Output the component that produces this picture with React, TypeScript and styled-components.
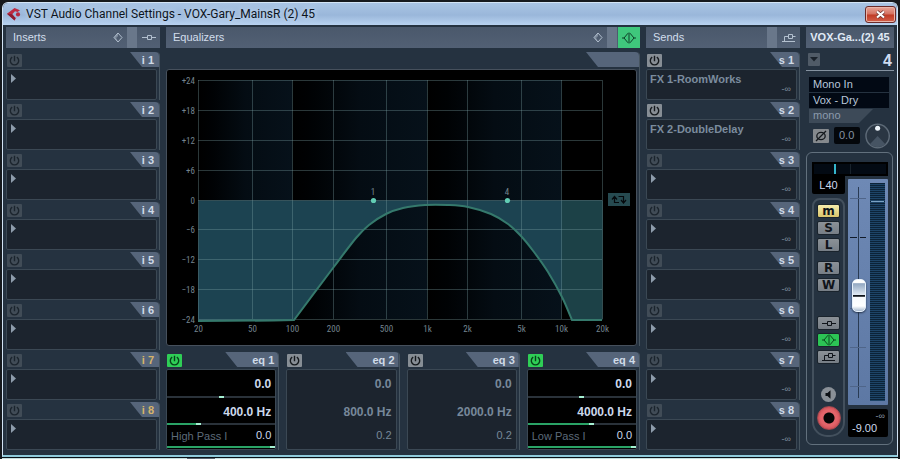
import React from "react";
import styled, { createGlobalStyle, css } from "styled-components";

const SANS = `"Liberation Sans", Arial, sans-serif`;
const NARROW = `"Liberation Sans Narrow", "Roboto Condensed", "Liberation Sans", sans-serif`;

const Global = createGlobalStyle`
  *, *::before, *::after { box-sizing: border-box; }
  body { margin: 0; background: #16191d; font-family: ${SANS}; font-size: 11px; color: #c3cedb; }
  button, input, select { font: inherit; color: inherit; margin: 0; padding: 0; border: 0; }
  h1, h2, p { margin: 0; font-weight: normal; }
`;

/* ---------- window frame ---------- */

const Desktop = styled.div`
  padding: 2px 2px 0 2px;
`;

const Window = styled.main`
  border: 1px solid #d3e4f5;
  border-bottom: 2px solid #8fcbdc;
  border-radius: 6px 6px 0 0;
  background: #253240;
  overflow: hidden;
`;

const TitleBar = styled.header`
  display: flex;
  align-items: center;
  gap: 4px;
  height: 22px;
  padding: 0 1px 0 4px;
  background: linear-gradient(#a9c4e4, #9ab7da 55%, #b8d2f0);
  color: #0c141d;
`;

const Title = styled.h1`
  flex: 1;
  font: 12px/20px Roboto, "Noto Sans", sans-serif;
  white-space: nowrap;
  text-shadow: 0 0 5px #dcebfa;
`;

const CloseButton = styled.button`
  display: grid;
  place-items: center;
  width: 31px;
  height: 17px;
  border: 1px solid #6b2a29;
  border-radius: 3px;
  background: linear-gradient(#e6a599, #d4705f 48%, #bf3a25 52%, #d3604a);
  box-shadow: inset 0 0 0 1px #eab5aa;
`;

const Underlay = styled.div`
  display: flex;
  height: 2px;
  border-top: 1px solid #0a1118;
  background: #c4dede;
`;

const UnderlayBlock = styled.i`
  width: 28px;
  margin-left: 185px;
  background: #55606c;
`;

/* ---------- columns ---------- */

const Columns = styled.div`
  display: grid;
  grid-template-columns: 154px minmax(0, 1fr) 154px 88px;
  gap: 6px;
  padding: 2px 3px 5px 3px;
`;

const Column = styled.section`
  display: flex;
  flex-direction: column;
  gap: 4px;
  min-width: 0;
`;

const Header = styled.div`
  display: flex;
  align-items: stretch;
  height: 21px;
  background: linear-gradient(#4a586b, #526074);
`;

const HeaderTitle = styled.h2`
  flex: 1;
  padding-left: 7px;
  font-size: 11px;
  line-height: 20px;
  color: #d2deec;
`;

const HeaderButton = styled.button<{ $on?: boolean; $narrow?: boolean }>`
  display: grid;
  place-items: center;
  width: ${(p) => (p.$narrow ? 18 : 22)}px;
  background: ${(p) => (p.$on ? "#3fc77c" : "transparent")};
  color: ${(p) => (p.$on ? "#0f4029" : "#b3c0cf")};
`;

const HeaderStrip = styled.span`
  width: 10px;
  background: #69778a;
  margin-right: 1px;
`;

/* ---------- modules (slot, band, graph) ---------- */

const Module = styled.div`
  border-right: 1px solid #46545f;
  border-top-right-radius: 4px;
  padding-right: 2px;
`;

const ModuleTop = styled.div`
  display: flex;
  justify-content: space-between;
  height: 17px;
  padding-left: 1px;
  margin-right: -2px;
`;

const Tab = styled.span<{ $wide?: boolean; $gold?: boolean }>`
  width: ${(p) => (p.$wide ? 53 : 29)}px;
  height: 15px;
  padding-right: ${(p) => (p.$wide ? 4 : 5)}px;
  border-top-right-radius: 4px;
  clip-path: polygon(0 0, 100% 0, 100% 100%, 12px 100%);
  background: #56657a;
  color: ${(p) => (p.$gold ? "#d6b46a" : "#d0dbe8")};
  font-weight: bold;
  font-size: 11px;
  line-height: 16px;
  text-align: right;
  white-space: nowrap;
`;

const Power = styled.button<{ $tone: "off" | "lit" | "green" }>`
  display: grid;
  place-items: center;
  width: 15px;
  height: 13px;
  margin-top: 2px;
  border-radius: 1px;
  ${(p) =>
    p.$tone === "off"
      ? css`background: #414c57; color: #1b242d;`
      : p.$tone === "lit"
      ? css`background: #878e95; color: #14181c;`
      : css`background: #2fce56; color: #07401a;`}
`;

const SlotList = styled.div`
  display: grid;
  gap: 2px;
`;

const SlotBox = styled.div`
  display: flex;
  flex-direction: column;
  justify-content: space-between;
  height: 31px;
  padding: 3px 5px 5px 3px;
  border: 1px solid #3b4854;
  border-radius: 2px;
  background: #1c242e;
`;

const SlotName = styled.p`
  font-weight: bold;
  font-size: 11px;
  line-height: 12px;
  height: 11px;
  color: #7b8c9e;
`;

const SlotArrow = styled.button`
  display: block;
  width: 5px;
  height: 9px;
  margin: 1px 0 1px 1px;
  background: #8e9cab;
  clip-path: polygon(0 0, 100% 50%, 0 100%);
`;

const SlotLevel = styled.span`
  align-self: flex-end;
  font-size: 9px;
  line-height: 10px;
  color: #7e8d9d;
`;

/* ---------- equalizer ---------- */

const GraphFrame = styled.div`
  height: 277px;
  border: 1px solid #46505c;
  border-radius: 3px;
  background: #000;
  overflow: hidden;
`;

const GraphSvg = styled.svg`
  display: block;
  width: 100%;
  height: 100%;
  text {
    font-family: ${NARROW};
    font-size: 9px;
    fill: #74848e;
  }
`;

const Bands = styled.div`
  display: grid;
  grid-template-columns: repeat(4, minmax(0, 1fr));
  gap: 7px;
  margin-top: 2px;
`;

const BandBox = styled.div<{ $on: boolean }>`
  display: grid;
  grid-template-rows: 26px 2px 25px 2px 21px 2px;
  height: 81px;
  border: 1px solid #3b4854;
  border-radius: 2px;
  background: ${(p) => (p.$on ? "#000" : "#1c242e")};
  color: ${(p) => (p.$on ? "#ccd9ec" : "#77889a")};
`;

const BandValue = styled.output`
  padding-right: 4px;
  font-weight: bold;
  font-size: 12px;
  line-height: 28px;
  text-align: right;
`;

const BandFooter = styled.div`
  display: flex;
  justify-content: space-between;
  padding: 0 4px;
  font-size: 11px;
  line-height: 21px;
`;

const FilterSelect = styled.select`
  appearance: none;
  background: transparent;
  color: #5d6b7a;
  font-size: 11px;
  line-height: 20px;
`;

const BandSlider = styled.input<{ $on: boolean; $fill: number }>`
  appearance: none;
  display: block;
  width: 100%;
  height: 2px;
  visibility: ${(p) => (p.$on ? "visible" : "hidden")};
  background: linear-gradient(to right, #2aa366 ${(p) => p.$fill}%, #2a323a ${(p) => p.$fill}%);
  &::-webkit-slider-thumb {
    appearance: none;
    width: 5px;
    height: 2px;
    background: #a5f0d2;
  }
`;

/* ---------- channel strip ---------- */

const ChannelName = styled.h2`
  height: 21px;
  background: linear-gradient(#4a586b, #526074);
  font-weight: bold;
  font-size: 11px;
  line-height: 21px;
  text-align: center;
  color: #e0eaf6;
  white-space: nowrap;
`;

const ChannelRow = styled.div`
  display: flex;
  justify-content: space-between;
  align-items: center;
  height: 19px;
  padding: 0 2px;
  border-bottom: 1px solid #8592a0;
  font-weight: bold;
  font-size: 16px;
  color: #cfdcf0;
`;

const MenuButton = styled.button`
  display: grid;
  place-items: center;
  width: 12px;
  height: 13px;
  margin-bottom: 3px;
  border-radius: 1px;
  background: #505b67;
  color: #1a222b;
`;

const Routing = styled.div`
  display: grid;
  gap: 1px;
  margin: 2px 5px 0 3px;
`;

const RouteButton = styled.button`
  height: 15px;
  padding-left: 4px;
  background: #020914;
  color: #b9c7da;
  font-size: 11px;
  line-height: 15px;
  text-align: left;
`;

const MonoTag = styled.span`
  width: 64px;
  height: 14px;
  padding-left: 4px;
  clip-path: polygon(0 0, 100% 0, 50px 100%, 0 100%);
  background: #3d4a58;
  color: #8c9bac;
  font-size: 11px;
  line-height: 13px;
`;

const InputRow = styled.div`
  display: flex;
  align-items: center;
  gap: 5px;
  height: 25px;
  margin-top: -4px;
  padding: 0 4px 0 7px;
  color: #8593a2;
`;

const PhaseButton = styled.button`
  display: grid;
  place-items: center;
  width: 16px;
  height: 14px;
  border-radius: 1px;
  background: #85898d;
  color: #15191d;
`;

const Gain = styled.output`
  width: 27px;
  height: 17px;
  border-radius: 2px;
  background: #04070b;
  font-size: 11px;
  line-height: 17px;
  text-align: center;
`;

const Strip = styled.div`
  display: flex;
  flex-direction: column;
  margin-right: 1px;
  height: 293px;
  padding: 9px 4px 7px 5px;
  border: 1px solid #62707d;
  border-radius: 6px;
`;

const PanBar = styled.input`
  appearance: none;
  width: 100%;
  height: 14px;
  border: 2px solid #000;
  background: linear-gradient(#18222b, #18222b) 50% / 1px 100% no-repeat #030a13;
  &::-webkit-slider-thumb {
    appearance: none;
    width: 2px;
    height: 10px;
    background: #35b6cc;
  }
`;

const StripBody = styled.div`
  display: grid;
  grid-template-columns: 33px minmax(0, 1fr);
  gap: 3px;
  flex: 1;
`;

const StripColumn = styled.div`
  display: flex;
  flex-direction: column;
  gap: 4px;
`;

const PanValue = styled.output`
  height: 18px;
  border-radius: 0 0 2px 2px;
  background: #000;
  color: #cbd9ee;
  font-size: 11px;
  line-height: 18px;
  text-align: center;
`;

const Rail = styled.div`
  display: flex;
  flex-direction: column;
  align-items: center;
  gap: 3px;
  flex: 1;
  padding-top: 4px;
  border: 2px solid #43505d;
  border-radius: 8px 8px 15px 15px;
`;

const RailButton = styled.button<{ $tone?: "yellow" | "green"; $gap?: boolean }>`
  display: grid;
  place-items: center;
  width: 23px;
  height: 14px;
  margin-top: ${(p) => (p.$gap ? 6 : 0)}px;
  border: 1px solid #1a232c;
  border-radius: 2px;
  background: ${(p) => (p.$tone === "yellow" ? "linear-gradient(#f6ecab, #d9c46c)" : p.$tone === "green" ? "#2cc455" : "linear-gradient(#8b9197, #777e86)")};
  color: ${(p) => (p.$tone === "green" ? "#0b4a1e" : "#10141a")};
  font: bold 12px/12px "DejaVu Sans", sans-serif;
`;

const RailGroup = styled.div`
  display: grid;
  gap: 3px;
  margin-top: 21px;
`;

const SpeakerButton = styled.button`
  display: grid;
  place-items: center;
  width: 15px;
  height: 15px;
  margin-top: 20px;
  border-radius: 50%;
  background: #8a9097;
  color: #0c1015;
`;

const RecordButton = styled.button`
  width: 24px;
  height: 24px;
  margin-top: 1px;
  border: 1px solid #a24a50;
  border-radius: 50%;
  background: radial-gradient(circle, #050505 5px, #e2646a 6px, #e2646a 8px, #cb4a51 12px);
`;

const FaderBay = styled.div`
  position: relative;
  height: 226px;
  margin-top: 3px;
  border-radius: 1px;
  background: linear-gradient(#6e89b5, #5d78a4);
  overflow: hidden;
`;

const FaderScale = styled.svg`
  display: block;
  width: 39px;
  height: 226px;
`;

const Fader = styled.input`
  position: absolute;
  inset: 0 auto 0 3px;
  writing-mode: vertical-lr;
  direction: rtl;
  appearance: none;
  width: 15px;
  height: 100%;
  background: transparent;
  &::-webkit-slider-thumb {
    appearance: none;
    width: 14px;
    height: 33px;
    border: 1px solid #e7f1fb;
    border-radius: 5px;
    background: linear-gradient(#fff 0 8%, #93a8c2 12%, #e3ecf6 49%, #10151c 50%, #10151c 53%, #f7fafd 54%, #fff 84%, #a9bbd0);
    box-shadow: 0 1px 2px #25344a;
  }
`;

const Readout = styled.div`
  height: 28px;
  padding: 2px 3px 0 4px;
  border-radius: 2px;
  background: #000;
  color: #ccd9ec;
  font-size: 11px;
  line-height: 13px;
`;

const Peak = styled.p`
  font-size: 9px;
  line-height: 11px;
  text-align: right;
  color: #8b99a8;
`;

/* ---------- icons ---------- */

const PowerIcon = () => (
  <svg width="11" height="11" viewBox="0 0 11 11" fill="none" stroke="currentColor" strokeWidth="1.4" aria-hidden="true">
    <path d="M3.2 2.2a4.2 4.2 0 1 0 4.6 0M5.5 .8v5.4" />
  </svg>
);

const PresetIcon = () => (
  <svg width="10" height="11" viewBox="0 0 10 11" fill="none" stroke="currentColor" aria-hidden="true">
    <path d="M5 1 9 5.5 5 10 1 5.5Z" strokeWidth="1" />
    <path d="M1 5.5 5 1v3.2L3.2 6 5 10Z" fill="currentColor" stroke="none" opacity="0.45" />
  </svg>
);

const InsertIcon = () => (
  <svg width="14" height="9" viewBox="0 0 14 9" fill="none" stroke="currentColor" aria-hidden="true">
    <path d="M0 4.5h5M10 4.5h4M5.5 2.5h4v4h-4z" />
  </svg>
);

const EqIcon = () => (
  <svg width="14" height="12" viewBox="0 0 14 12" fill="none" stroke="currentColor" aria-hidden="true">
    <path d="M0 6h2.5M11.5 6H14M7 .5v11M6 1.2 2 6l4 4.8M8 1.2 12 6l-4 4.8" />
  </svg>
);

const SendIcon = () => (
  <svg width="14" height="10" viewBox="0 0 14 10" fill="none" stroke="currentColor" aria-hidden="true">
    <path d="M0 8.5h13M2.5 8V3.5H6M6.5 1.5h4v4h-4zM11 3.5h2.5" />
  </svg>
);

const CaretIcon = () => (
  <svg width="8" height="5" viewBox="0 0 8 5" aria-hidden="true"><path d="M0 0h8L4 4.5Z" fill="currentColor" /></svg>
);

const PhaseIcon = () => (
  <svg width="12" height="12" viewBox="0 0 12 12" fill="none" stroke="currentColor" strokeWidth="1.3" aria-hidden="true">
    <ellipse cx="6" cy="6" rx="4.2" ry="3.7" /><path d="M1 11 11 1" />
  </svg>
);

const SpeakerIcon = () => (
  <svg width="9" height="9" viewBox="0 0 9 9" fill="currentColor" aria-hidden="true"><path d="M1.5 3H3.5L6.5.3V8.7L3.5 6H1.5Z" /></svg>
);

const CloseIcon = () => (
  <svg width="11" height="9" viewBox="0 0 11 9" aria-hidden="true">
    <path d="M2 1.5 9 7.5M9 1.5 2 7.5" stroke="#6d3430" strokeWidth="3.6" />
    <path d="M2 1.5 9 7.5M9 1.5 2 7.5" stroke="#fff" strokeWidth="2.1" />
  </svg>
);

const Logo = () => (
  <svg width="15" height="15" viewBox="0 0 15 15" aria-hidden="true">
    <path d="M0 6.8 7.5 1 13 3.2 10.5 5 8 4.2 5.2 7.2 8.2 10.8 9.4 10.5 7.6 13.5Z" fill="#bd2a41" />
    <path d="M0 6.8 5.2 7.2 8.2 10.8 7.6 13.5Z" fill="#8d1c30" />
    <circle cx="11" cy="7.4" r="2.1" fill="#b82840" />
  </svg>
);

const PanKnob = () => (
  <svg width="26" height="26" viewBox="0 0 26 26" role="img" aria-label="Input gain knob">
    <circle cx="13" cy="13" r="12" fill="#2a3643" stroke="#5d6a77" strokeWidth="1.5" />
    <path d="M13 13 21 21.5A12 12 0 0 1 5 21.5Z" fill="#465463" />
    <circle cx="13" cy="5" r="2.6" fill="#eef4fa" />
  </svg>
);

/* ---------- graph ---------- */

const PLOT = { x: 30, y: 10, w: 404, h: 239 };
const FREQS: [number, string][] = [
  [20, "20"], [50, "50"], [100, "100"], [200, "200"], [500, "500"],
  [1000, "1k"], [2000, "2k"], [5000, "5k"], [10000, "10k"], [20000, "20k"],
];
const LEVELS = [24, 18, 12, 6, 0, -6, -12, -18, -24];

const freqX = (f: number) => Math.round(PLOT.x + (Math.log10(f / 20) / 3) * PLOT.w) + 0.5;
const levelY = (db: number) => Math.round(PLOT.y + ((24 - db) / 48) * PLOT.h) + 0.5;
const levelText = (db: number) => (db > 0 ? `+${db}` : db < 0 ? `−${-db}` : "0");

const RESPONSE: [number, number][] = [
  [126, 250], [165, 198], [188, 168], [201, 155], [218, 144], [235, 138], [257, 135], [280, 135],
  [300, 137], [323, 144], [340, 154], [353, 166], [366, 182], [380, 202], [394, 227], [404, 250],
];

const smooth = (pts: [number, number][]) =>
  pts.slice(0, -1).map((p1, i) => {
    const p0 = pts[Math.max(i - 1, 0)];
    const p2 = pts[i + 1];
    const p3 = pts[Math.min(i + 2, pts.length - 1)];
    return `C${p1[0] + (p2[0] - p0[0]) / 6} ${p1[1] + (p2[1] - p0[1]) / 6} ${p2[0] - (p3[0] - p1[0]) / 6} ${p2[1] - (p3[1] - p1[1]) / 6} ${p2[0]} ${p2[1]}`;
  }).join("");

const CURVE = `M30 251 L105 250.5 L126 250${smooth(RESPONSE)}L434 250`;
const DECADES: [number, number][] = [[20, 100], [100, 1000], [1000, 10000]];

const Graph = () => {
  const zero = levelY(0);
  return (
    <GraphFrame>
      <GraphSvg viewBox="0 0 467 275" role="img" aria-label="Equalizer curve">
        <defs>
          <linearGradient id="decade">
            <stop offset="0" stopColor="#000" /><stop offset="0.15" stopColor="#000204" />
            <stop offset="0.5" stopColor="#040c13" /><stop offset="1" stopColor="#06111a" />
          </linearGradient>
        </defs>
        {DECADES.map(([a, b]) => (
          <rect key={a} x={freqX(a)} y={PLOT.y} width={freqX(b) - freqX(a)} height={PLOT.h} fill="url(#decade)" />
        ))}
        <path d={`${CURVE}L434.5 ${zero}H30.5Z`} fill="#1c4351" />
        <path d={`M404 250 394 227V${zero}H434.5V250Z`} fill="#1c4147" />
        <g stroke="#7da3a8" strokeOpacity="0.34">
          {FREQS.map(([f]) => <path key={f} d={`M${freqX(f)} ${PLOT.y}V${PLOT.y + PLOT.h}`} />)}
          {LEVELS.map((l) => <path key={l} d={`M${PLOT.x} ${levelY(l)}H${PLOT.x + PLOT.w}`} />)}
        </g>
        <path d={CURVE} fill="none" stroke="#35796c" strokeWidth="2" />
        {LEVELS.map((l) => <text key={l} x="27" y={levelY(l) + 3} textAnchor="end">{levelText(l)}</text>)}
        {FREQS.map(([f, label]) => <text key={f} x={freqX(f)} y="262" textAnchor="middle">{label}</text>)}
        <g fill="#62cdb4"><circle cx="205.5" cy={zero} r="2.6" /><circle cx="339.5" cy={zero} r="2.6" /></g>
        <text x="205" y="125" textAnchor="middle">1</text>
        <text x="339" y="125" textAnchor="middle">4</text>
        <rect x="440" y="123" width="22" height="13" fill="#264a50" />
        <path d="M446.5 133V127M444 129.5l2.500-3 2.500 3M446 132.500h5M450.500 126.500h5V132M453 130l2.500 3 2.500-3" fill="none" stroke="#05090c" strokeWidth="1.200" />
      </GraphSvg>
    </GraphFrame>
  );
};

/* ---------- panels ---------- */

type SlotData = { label: string; gold?: boolean; name?: string; level?: boolean };

const Slot = ({ label, gold, name, level }: SlotData) => (
  <Module>
    <ModuleTop>
      <Power $tone={name ? "lit" : "off"} aria-label={`Power ${label}`}><PowerIcon /></Power>
      <Tab $gold={gold}>{label}</Tab>
    </ModuleTop>
    <SlotBox>
      {name ? <SlotName>{name}</SlotName> : <SlotArrow aria-label={`Select effect ${label}`} />}
      {level && <SlotLevel>-∞</SlotLevel>}
    </SlotBox>
  </Module>
);

const NUMBERS = [1, 2, 3, 4, 5, 6, 7, 8];
const INSERTS: SlotData[] = NUMBERS.map((n) => ({ label: `i ${n}`, gold: n > 6 }));
const SEND_NAMES = ["FX 1-RoomWorks", "FX 2-DoubleDelay"];
const SENDS: SlotData[] = NUMBERS.map((n) => ({ label: `s ${n}`, name: SEND_NAMES[n - 1], level: true }));

type BandData = { label: string; freq: string; pos: number; q: string; filter?: string };
const BANDS: BandData[] = [
  { label: "eq 1", freq: "400.0 Hz", pos: 28, q: "0.0", filter: "High Pass I" },
  { label: "eq 2", freq: "800.0 Hz", pos: 36, q: "0.2" },
  { label: "eq 3", freq: "2000.0 Hz", pos: 48, q: "0.2" },
  { label: "eq 4", freq: "4000.0 Hz", pos: 59, q: "0.0", filter: "Low Pass I" },
];

const Band = ({ label, freq, pos, q, filter }: BandData) => {
  const on = Boolean(filter);
  return (
    <Module>
      <ModuleTop>
        <Power $tone={on ? "green" : "lit"} aria-label={`Power ${label}`}><PowerIcon /></Power>
        <Tab $wide>{label}</Tab>
      </ModuleTop>
      <BandBox $on={on}>
        <BandValue>0.0</BandValue>
        <BandSlider type="range" $on={on} $fill={0} defaultValue={50} aria-label={`${label} gain`} />
        <BandValue>{freq}</BandValue>
        <BandSlider type="range" $on={on} $fill={pos} defaultValue={pos} aria-label={`${label} frequency`} />
        <BandFooter>
          {filter ? (
            <FilterSelect aria-label={`${label} filter type`}><option>{filter}</option></FilterSelect>
          ) : <span />}
          <output>{q}</output>
        </BandFooter>
        <BandSlider type="range" $on={on} $fill={100} defaultValue={100} aria-label={`${label} Q`} />
      </BandBox>
    </Module>
  );
};

const TICKS = [20, 130, 169, 208];

const ChannelStrip = () => (
  <Column as="aside" aria-label="Channel">
    <ChannelName>VOX-Ga...(2) 45</ChannelName>
    <ChannelRow>
      <MenuButton aria-label="Channel menu"><CaretIcon /></MenuButton>
      <span>4</span>
    </ChannelRow>
    <Routing>
      <RouteButton>Mono In</RouteButton>
      <RouteButton>Vox - Dry</RouteButton>
      <MonoTag>mono</MonoTag>
    </Routing>
    <InputRow>
      <PhaseButton aria-label="Phase"><PhaseIcon /></PhaseButton>
      <Gain>0.0</Gain>
      <PanKnob />
    </InputRow>
    <Strip>
      <PanBar type="range" defaultValue={29} aria-label="Pan" />
      <StripBody>
        <StripColumn>
          <PanValue>L40</PanValue>
          <Rail>
            <RailButton $tone="yellow" aria-label="Mute">m</RailButton>
            <RailButton aria-label="Solo">S</RailButton>
            <RailButton aria-label="Listen">L</RailButton>
            <RailButton $gap aria-label="Read">R</RailButton>
            <RailButton aria-label="Write">W</RailButton>
            <RailGroup>
              <RailButton aria-label="Inserts"><InsertIcon /></RailButton>
              <RailButton $tone="green" aria-label="Equalizers"><EqIcon /></RailButton>
              <RailButton aria-label="Sends"><SendIcon /></RailButton>
            </RailGroup>
            <SpeakerButton aria-label="Monitor"><SpeakerIcon /></SpeakerButton>
            <RecordButton aria-label="Record enable" />
          </Rail>
        </StripColumn>
        <StripColumn>
          <FaderBay>
            <FaderScale viewBox="0 0 39 226" aria-hidden="true">
              <defs>
                <pattern id="led" width="4" height="2" patternUnits="userSpaceOnUse">
                  <rect width="4" height="2" fill="#1d4467" /><rect width="4" height="1" fill="#0c2338" />
                </pattern>
              </defs>
              <path d="M10.5 8V219" stroke="#293b54" />
              {TICKS.map((y) => <path key={y} d={`M2 ${y - 0.5}H18`} stroke="#4f6589" />)}
              <path d="M2 58.5H9M12 58.5H18" stroke="#111b2a" />
              <rect x="22" y="4" width="15" height="218" fill="url(#led)" />
              <path d="M23 22.5H36" stroke="#7ba3c4" />
            </FaderScale>
            <Fader type="range" defaultValue={48} aria-label="Volume" />
          </FaderBay>
          <Readout>
            <Peak>-∞</Peak>
            <output>-9.00</output>
          </Readout>
        </StripColumn>
      </StripBody>
    </Strip>
  </Column>
);

const PanelHeader = ({ title, preset, on, children }: { title: string; preset?: boolean; on?: boolean; children: React.ReactNode }) => (
  <Header>
    <HeaderTitle>{title}</HeaderTitle>
    {preset && <HeaderButton $narrow aria-label={`${title} presets`}><PresetIcon /></HeaderButton>}
    <HeaderStrip />
    <HeaderButton $on={on} aria-label={`Bypass ${title}`}>{children}</HeaderButton>
  </Header>
);

export default function App() {
  return (
    <>
      <Global />
      <Desktop>
        <Window>
          <TitleBar>
            <Logo />
            <Title>VST Audio Channel Settings - VOX-Gary_MainsR (2) 45</Title>
            <CloseButton aria-label="Close"><CloseIcon /></CloseButton>
          </TitleBar>
          <Columns>
            <Column>
              <PanelHeader title="Inserts" preset><InsertIcon /></PanelHeader>
              <SlotList>{INSERTS.map((s) => <Slot key={s.label} {...s} />)}</SlotList>
            </Column>
            <Column>
              <PanelHeader title="Equalizers" preset on><EqIcon /></PanelHeader>
              <Module>
                <ModuleTop><span /><Tab $wide /></ModuleTop>
                <Graph />
              </Module>
              <Bands>{BANDS.map((b) => <Band key={b.label} {...b} />)}</Bands>
            </Column>
            <Column>
              <PanelHeader title="Sends"><SendIcon /></PanelHeader>
              <SlotList>{SENDS.map((s) => <Slot key={s.label} {...s} />)}</SlotList>
            </Column>
            <ChannelStrip />
          </Columns>
        </Window>
        <Underlay><UnderlayBlock /></Underlay>
      </Desktop>
    </>
  );
}
